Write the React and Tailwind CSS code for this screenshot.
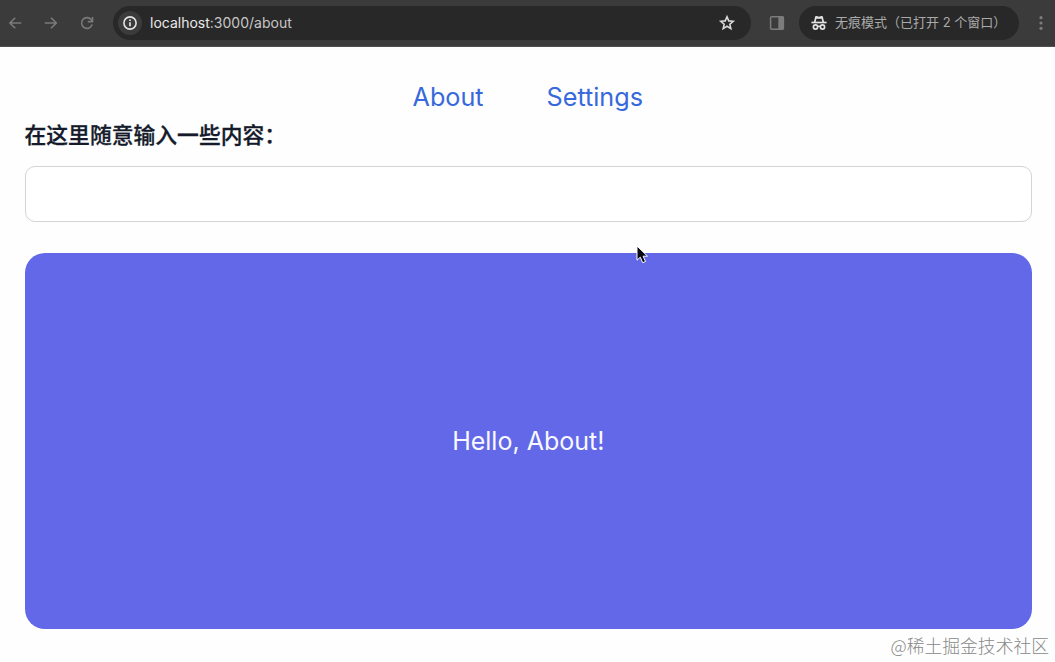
import React from "react";

function BackIcon() {
  return (
    <svg className="h-4 w-4 shrink-0" viewBox="0 0 16 16" fill="none" stroke="#7a7a7a" strokeWidth="1.6">
      <path d="M13.3 8H1.7M7.2 2.7 1.9 8l5.3 5.3" />
    </svg>
  );
}

function ForwardIcon() {
  return (
    <svg className="ml-[19px] h-4 w-4 shrink-0" viewBox="0 0 16 16" fill="none" stroke="#7a7a7a" strokeWidth="1.6">
      <path d="M1.7 8h11.4M8 2.7 13.3 8 8 13.3" />
    </svg>
  );
}

function ReloadIcon() {
  return (
    <svg className="ml-5 h-4 w-4 shrink-0" viewBox="0 0 16 16" fill="none" stroke="#7a7a7a" strokeWidth="1.6">
      <path d="M13.2 9.4A5.4 5.4 0 1 1 12.2 4.6L13.2 6" />
      <path d="M13.5 2v4.6H8.8" />
    </svg>
  );
}

function InfoIcon() {
  return (
    <svg className="h-4 w-4" viewBox="0 0 16 16" fill="none" stroke="#e3e3e3" strokeWidth="1.6">
      <circle cx="8" cy="8" r="6.1" />
      <path d="M8 7.2v4M8 4.5v1.6" strokeWidth="1.7" />
    </svg>
  );
}

function StarIcon() {
  return (
    <svg className="h-[18px] w-[18px]" viewBox="0 0 18 18" fill="none" stroke="#dadada" strokeWidth="1.6">
      <path d="m9 2.8 1.75 4.1 4.45.4-3.37 2.94 1 4.36L9 12.3l-3.83 2.3 1-4.36L2.8 7.3l4.45-.4Z" />
    </svg>
  );
}

function PanelIcon() {
  return (
    <svg className="ml-[18px] h-4 w-4 shrink-0" viewBox="0 0 16 16">
      <rect x="1.6" y="1.7" width="12.8" height="12.6" rx="1" fill="none" stroke="#7c7c7c" strokeWidth="1.5" />
      <path d="M9.3 1.7h5v12.6h-5z" fill="#7c7c7c" />
    </svg>
  );
}

function IncognitoIcon() {
  return (
    <svg className="h-4 w-4 shrink-0" viewBox="0 0 16 16" fill="none" stroke="#e3e3e3" strokeWidth="1.7">
      <path d="M.4 7.5h15.2" />
      <path d="M3.7 7.2 5 1.8 8 2.5l3-.7 1.3 5.4" strokeLinejoin="round" />
      <path d="M5 1.6 8 2.3l3-.7.5 2.2h-7Z" fill="#e3e3e3" stroke="none" />
      <circle cx="4.5" cy="12" r="2.1" />
      <circle cx="11.5" cy="12" r="2.1" />
      <path d="M6.6 11.5q1.4-.7 2.8 0" strokeWidth="1.4" />
    </svg>
  );
}

function Toolbar() {
  return (
    <header className="flex h-[47px] items-center border-b border-[#505050] bg-[#3b3b3b] pl-2">
      <BackIcon />
      <ForwardIcon />
      <ReloadIcon />
      <div className="ml-[18px] flex h-[34px] w-[638px] shrink-0 items-center rounded-full bg-[#282828] pr-[15px] pl-[5px]">
        <span className="flex h-6 w-6 items-center justify-center rounded-full bg-[#3b3b3b]">
          <InfoIcon />
        </span>
        <span className="ml-2 grow text-[14px] leading-5 text-[#c7c7c7]">
          <span className="text-[#e8e8e8]">localhost</span>:3000/about
        </span>
        <StarIcon />
      </div>
      <PanelIcon />
      <div className="ml-[14px] flex h-[34px] w-[220px] shrink-0 items-center rounded-full bg-[#282828] pl-3">
        <IncognitoIcon />
        <span className="ml-2 text-[13px] whitespace-nowrap text-[#aaaaaa]">无痕模式（已打开 2 个窗口）</span>
      </div>
      <svg className="ml-[14px] h-4 w-4 shrink-0" viewBox="0 0 16 16" fill="#7c7c7c">
        <circle cx="8" cy="2.7" r="1.6" />
        <circle cx="8" cy="8" r="1.6" />
        <circle cx="8" cy="13.3" r="1.6" />
      </svg>
    </header>
  );
}

function Cursor() {
  return (
    <svg className="absolute top-[245px] left-[635px] h-[20px] w-[14px]" viewBox="0 0 14 20">
      <path d="M2 1v14.2l3.3-3 2.4 5.5 2.8-1.2-2.4-5.3h4.4Z" fill="#090914" stroke="#fff" strokeWidth="1" />
    </svg>
  );
}

export default function App() {
  return (
    <div className="relative flex h-[662px] w-[1055px] flex-col overflow-hidden bg-[#fefefe] font-['Inter','Noto_Sans_CJK_SC',sans-serif]">
      <Toolbar />
      <main className="flex flex-col pr-[23px] pl-[24.5px]">
        <nav className="mt-8 flex h-9 items-center justify-center gap-[63px] pt-0.5 pr-px text-[25.2px] text-[#3769dc]">
          <a>About</a>
          <a>Settings</a>
        </nav>
        <label className="mt-1 flex h-8 items-center text-[21.8px] font-medium text-[#151b2b] [-webkit-text-stroke:0.3px_#151b2b]">在这里随意输入一些内容：</label>
        <input className="mt-[15px] h-14 rounded-[10px] border border-[#d3d4d8] bg-white px-4 outline-none" />
        <section className="mt-[31.4px] flex h-[375.2px] items-center justify-center rounded-[20px] bg-[#6268e8] pt-px text-[25px] text-[#f8f9ff]">
          Hello, About!
        </section>
      </main>
      <footer className="mt-[3px] mr-[6px] self-end font-['Noto_Sans_CJK_SC'] text-[17.8px] leading-[26px] font-light text-[#888888]">
        @稀土掘金技术社区
      </footer>
      <Cursor />
    </div>
  );
}
